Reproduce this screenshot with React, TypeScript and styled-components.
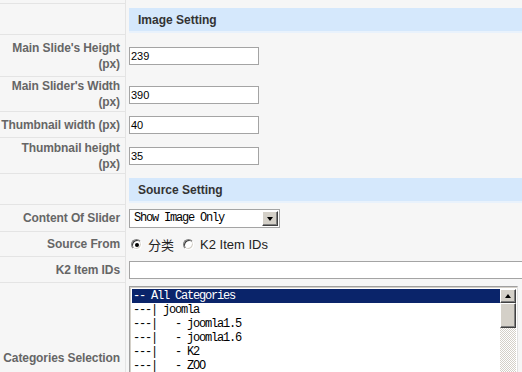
import React from "react";
import styled, { createGlobalStyle } from "styled-components";

const Global = createGlobalStyle`
  html, body { margin: 0; padding: 0; background: #f6f6f6; overflow: hidden; }
  body { width: 522px; height: 372px; }
`;

const Table = styled.div`
  display: flex;
  flex-direction: column;
  width: 522px;
  font-family: "Liberation Sans", Arial, sans-serif;
`;

const Row = styled.div<{ $h: number }>`
  display: grid;
  grid-template-columns: 126px 1fr;
  height: ${(p) => p.$h}px;
  flex: none;
`;

const Key = styled.div`
  box-sizing: border-box;
  border-right: 1px solid #e4e4e4;
  border-bottom: 1px solid #e4e4e4;
  display: flex;
  align-items: center;
  justify-content: flex-end;
  text-align: right;
  padding-right: 5px;
  font-size: 12px;
  font-weight: bold;
  color: #666;
  line-height: 16px;
  letter-spacing: -0.1px;
  white-space: nowrap;
`;

const Value = styled.div<{ $top?: boolean }>`
  box-sizing: border-box;
  padding-left: 3px;
  display: flex;
  align-items: ${(p) => (p.$top ? "flex-start" : "center")};
  padding-top: ${(p) => (p.$top ? "3px" : "0")};
  min-width: 0;
  overflow: hidden;
`;

const HeaderCell = styled.div`
  box-sizing: border-box;
  padding: 4px 0 0 3px;
`;

const Band = styled.div`
  height: 25px;
  box-sizing: border-box;
  background: #d5e8fc;
  border-bottom: 2px solid #e9f2fc;
  padding-left: 9px;
  font-size: 12px;
  font-weight: bold;
  color: #333;
  line-height: 25px;
`;

const TextInput = styled.div<{ $w: number }>`
  box-sizing: border-box;
  width: ${(p) => p.$w}px;
  flex: none;
  height: 18px;
  background: #fff;
  border: 1px solid #a4a4a4;
  font-size: 11px;
  line-height: 16px;
  padding-left: 1px;
  color: #000;
`;

const Select = styled.div`
  box-sizing: border-box;
  width: 151px;
  height: 19px;
  background: #fff;
  border: 1px solid #a4a4a4;
  display: flex;
  align-items: stretch;
  padding: 1px;
`;

const SelectText = styled.div`
  flex: 1;
  font-family: "Liberation Mono", monospace;
  font-size: 12px;
  letter-spacing: -1.2px;
  line-height: 15px;
  padding-left: 3px;
  color: #000;
  white-space: pre;
`;

const Bevel = styled.div<{ $w: number; $h: number }>`
  box-sizing: border-box;
  width: ${(p) => p.$w}px;
  height: ${(p) => p.$h}px;
  flex: none;
  background: #d4d0c8;
  border: 1px solid;
  border-color: #ffffff #404040 #404040 #ffffff;
  box-shadow: inset -1px -1px #808080;
  display: flex;
  align-items: center;
  justify-content: center;
`;

const Tri = styled.div<{ $up?: boolean }>`
  width: 0;
  height: 0;
  border-left: 3.5px solid transparent;
  border-right: 3.5px solid transparent;
  ${(p) => (p.$up ? "border-bottom: 4px solid #000;" : "border-top: 4px solid #000;")}
  margin-top: ${(p) => (p.$up ? "-1px" : "0")};
`;

const Radios = styled.div`
  display: flex;
  align-items: center;
  font-size: 13px;
  color: #222;
`;

const Radio = styled.span<{ $on?: boolean }>`
  box-sizing: border-box;
  width: 11px;
  height: 11px;
  border-radius: 50%;
  background: #fff;
  border: 1px solid;
  border-color: #808080 #ffffff #ffffff #808080;
  box-shadow: inset 1px 1px #404040, inset -1px -1px #d4d0c8;
  display: inline-flex;
  align-items: center;
  justify-content: center;
  margin: 0 6px 0 2px;
  &::after {
    content: "";
    width: 4px;
    height: 4px;
    border-radius: 50%;
    background: ${(p) => (p.$on ? "#000" : "transparent")};
  }
`;

const RadioLabel = styled.span<{ $cjk?: boolean }>`
  margin-right: 7px;
  font-family: ${(p) =>
    p.$cjk ? '"Noto Sans CJK SC", sans-serif' : '"Liberation Sans", Arial, sans-serif'};
`;

const ListBox = styled.div`
  box-sizing: border-box;
  width: 389px;
  height: 142px;
  flex: none;
  background: #fff;
  border: 1px solid;
  border-color: #a0a0a0 #e0e0e0 #e0e0e0 #a0a0a0;
  box-shadow: inset 1px 1px #d4d0c8;
  display: flex;
  padding: 2px 1px 1px 2px;
`;

const Options = styled.div`
  flex: 1;
  font-family: "Liberation Mono", monospace;
  font-size: 12px;
  letter-spacing: -1.2px;
  line-height: 14px;
  color: #000;
`;

const Option = styled.div<{ $sel?: boolean }>`
  white-space: pre;
  padding-left: 1px;
  height: 14px;
  background: ${(p) => (p.$sel ? "#0a246a" : "transparent")};
  color: ${(p) => (p.$sel ? "#fff" : "#000")};
`;

const ScrollBar = styled.div`
  width: 16px;
  flex: none;
  display: flex;
  flex-direction: column;
  background: repeating-conic-gradient(#d4d0c8 0 25%, #ffffff 0 50%) 0 0 / 2px 2px;
`;

const rows: { label: string; value: string; h: number; wrap: boolean }[] = [
  { label: "Main Slide's Height", value: "239", h: 42, wrap: true },
  { label: "Main Slider's Width", value: "390", h: 35, wrap: true },
  { label: "Thumbnail width", value: "40", h: 26, wrap: false },
  { label: "Thumbnail height", value: "35", h: 36, wrap: true },
];

const options = [
  "-- All Categories",
  "---| joomla",
  "---|   - joomla1.5",
  "---|   - joomla1.6",
  "---|   - K2",
  "---|   - ZOO",
  "---|   - VirtueMart",
  "---| Uncategorised",
  "---| News",
];

export default function App() {
  return (
    <>
      <Global />
      <Table>
        <Row $h={4}>
          <Key />
          <div />
        </Row>
        <Row $h={31}>
          <Key />
          <HeaderCell>
            <Band>Image Setting</Band>
          </HeaderCell>
        </Row>
        {rows.map((r) => (
          <Row key={r.label} $h={r.h}>
            <Key>
              <span>
                {r.label}
                {r.wrap ? <br /> : " "}
                (px)
              </span>
            </Key>
            <Value>
              <TextInput $w={130}>{r.value}</TextInput>
            </Value>
          </Row>
        ))}
        <Row $h={31}>
          <Key />
          <HeaderCell>
            <Band>Source Setting</Band>
          </HeaderCell>
        </Row>
        <Row $h={27}>
          <Key>Content Of Slider</Key>
          <Value>
            <Select>
              <SelectText>Show Image Only</SelectText>
              <Bevel $w={16} $h={15}>
                <Tri />
              </Bevel>
            </Select>
          </Value>
        </Row>
        <Row $h={25}>
          <Key>Source From</Key>
          <Value>
            <Radios>
              <Radio $on />
              <RadioLabel $cjk>分类</RadioLabel>
              <Radio />
              <RadioLabel>K2 Item IDs</RadioLabel>
            </Radios>
          </Value>
        </Row>
        <Row $h={26}>
          <Key>K2 Item IDs</Key>
          <Value>
            <TextInput $w={420} />
          </Value>
        </Row>
        <Row $h={150}>
          <Key>Categories Selection</Key>
          <Value $top>
            <ListBox>
              <Options>
                {options.map((o, i) => (
                  <Option key={i} $sel={i === 0}>
                    {o}
                  </Option>
                ))}
              </Options>
              <ScrollBar>
                <Bevel $w={16} $h={14}>
                  <Tri $up />
                </Bevel>
                <Bevel $w={16} $h={25} />
              </ScrollBar>
            </ListBox>
          </Value>
        </Row>
      </Table>
    </>
  );
}
